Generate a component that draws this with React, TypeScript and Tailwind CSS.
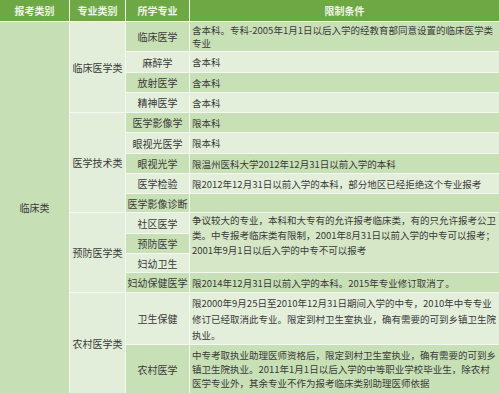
const font = { fontFamily: '"Noto Sans CJK SC", "Noto Sans", sans-serif' };

type Row = {
  pos: string;
  name: string;
  cond?: string[];
  lead?: string;
  dark: boolean;
};

const rows: Row[] = [
  { pos: "row-start-2", name: "临床医学", dark: true, lead: "leading-[13px]", cond: ["含本科。专科-2005年1月1日以后入学的经教育部同意设置的临床医学类", "专业"] },
  { pos: "row-start-3", name: "麻醉学", dark: false, cond: ["含本科"] },
  { pos: "row-start-4", name: "放射医学", dark: true, cond: ["含本科"] },
  { pos: "row-start-5", name: "精神医学", dark: false, cond: ["含本科"] },
  { pos: "row-start-6", name: "医学影像学", dark: true, cond: ["限本科"] },
  { pos: "row-start-7", name: "眼视光医学", dark: false, cond: ["限本科"] },
  { pos: "row-start-8", name: "眼视光学", dark: true, cond: ["限温州医科大学2012年12月31日以前入学的本科"] },
  { pos: "row-start-9", name: "医学检验", dark: false, cond: ["限2012年12月31日以前入学的本科，部分地区已经拒绝这个专业报考"] },
  { pos: "row-start-10", name: "医学影像诊断", dark: true, cond: [""] },
  { pos: "row-start-11", name: "社区医学", dark: false },
  { pos: "row-start-12", name: "预防医学", dark: true },
  { pos: "row-start-13", name: "妇幼卫生", dark: false },
  { pos: "row-start-14", name: "妇幼保健医学", dark: true, cond: ["限2014年12月31日以前入学的本科。2015年专业修订取消了。"] },
  {
    pos: "row-start-15",
    name: "卫生保健",
    dark: false,
    lead: "leading-[16px]",
    cond: [
      "限2000年9月25日至2010年12月31日期间入学的中专，2010年中专专业",
      "修订已经取消此专业。限定到村卫生室执业，确有需要的可到乡镇卫生院",
      "执业。",
    ],
  },
  {
    pos: "row-start-16",
    name: "农村医学",
    dark: true,
    lead: "leading-[14px]",
    cond: [
      "中专考取执业助理医师资格后，限定到村卫生室执业，确有需要的可到乡",
      "镇卫生院执业。2011年1月1日以后入学的中等职业学校毕业生，除农村",
      "医学专业外，其余专业不作为报考临床类别助理医师依据",
    ],
  },
];

function Lines({ lines, lead }: { lines: string[]; lead?: string }) {
  return (
    <div className="flex flex-col justify-center h-full pl-[2px]">
      {lines.map((l, i) => (
        <div key={i} className={`whitespace-nowrap ${lead ?? "leading-[16px]"}`}>
          {l}
        </div>
      ))}
    </div>
  );
}

export default function App() {
  const head = "bg-[#6da845] text-[#eef5e6] text-[10px] font-bold flex items-center justify-center";
  return (
    <div className="w-[499px] h-[393px] bg-white overflow-hidden text-[9.5px] text-[#3a3a3a]" style={font}>
      <div className="grid gap-px bg-[#f4f8f0] grid-cols-[69px_55px_63px_309px] grid-rows-[21px_29px_20px_19px_19px_19px_20px_19px_19px_18px_20px_19px_18px_19px_51px_48px]">
        {/* header */}
        <div className={`${head} col-start-1 row-start-1`}>报考类别</div>
        <div className={`${head} col-start-2 row-start-1`}>专业类别</div>
        <div className={`${head} col-start-3 row-start-1`}>所学专业</div>
        <div className={`${head} col-start-4 row-start-1`}>限制条件</div>

        {/* col 1 */}
        <div className="col-start-1 row-start-2 row-span-15 bg-[#c7dfb4] flex items-center justify-center text-[10px]">临床类</div>

        {/* col 2 */}
        <div className="col-start-2 row-start-2 row-span-4 bg-[#e2eed9] flex items-center justify-center text-[10px]">临床医学类</div>
        <div className="col-start-2 row-start-6 row-span-5 bg-[#e2eed9] flex items-center justify-center text-[10px]">医学技术类</div>
        <div className="col-start-2 row-start-11 row-span-4 bg-[#e2eed9] flex items-center justify-center text-[10px]">预防医学类</div>
        <div className="col-start-2 row-start-15 row-span-2 bg-[#e2eed9] flex items-center justify-center text-[10px]">农村医学类</div>

        {/* col 3 + 4 */}
        {rows.map((r) => (
          <div key={r.name} className="contents">
            <div
              className={`col-start-3 ${r.pos} ${r.dark ? "bg-[#c8e0b5]" : "bg-[#e3efdb]"} flex items-center justify-center whitespace-nowrap overflow-hidden text-[10px]`}
            >
              {r.name}
            </div>
            {r.cond && (
              <div className={`col-start-4 ${r.pos} ${r.dark ? "bg-[#c8e0b5]" : "bg-[#e3efdb]"} overflow-hidden`}>
                <Lines lines={r.cond} lead={r.lead} />
              </div>
            )}
          </div>
        ))}

        {/* merged condition cell */}
        <div className="col-start-4 row-start-11 row-span-3 bg-[#d5e7c6] overflow-hidden">
          <div className="flex flex-col pl-[2px] whitespace-nowrap">
            <div className="leading-[15px]">争议较大的专业，本科和大专有的允许报考临床类，有的只允许报考公卫</div>
            <div className="leading-[15px]">类。中专报考临床类有限制，2001年8月31日以前入学的中专可以报考；</div>
            <div className="leading-[15px]">2001年9月1日以后入学的中专不可以报考</div>
          </div>
        </div>
      </div>
    </div>
  );
}
